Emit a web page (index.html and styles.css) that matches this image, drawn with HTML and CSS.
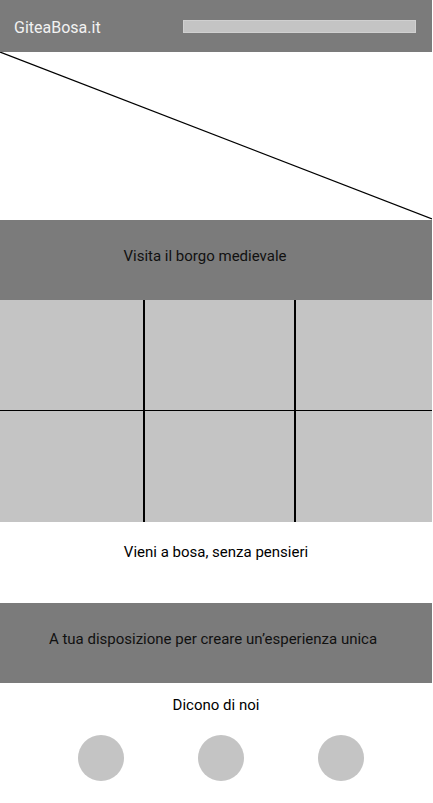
FILE: index.html
```html
<!DOCTYPE html>
<html lang="it">
<head>
  <meta charset="UTF-8">
  <meta name="viewport" content="width=device-width, initial-scale=1.0">
  <title>GiteaBosa.it</title>
  <link rel="stylesheet" href="styles.css">
</head>
<body>
  <div class="page">
    <!-- Top bar -->
    <header class="topbar">
      <span class="logo">GiteaBosa.it</span>
      <div class="search-bar"></div>
    </header>

    <!-- Hero placeholder -->
    <div class="hero">
      <svg class="hero-line" viewBox="0 0 432 168" preserveAspectRatio="none">
        <line x1="0" y1="0" x2="432" y2="167" stroke="#000" stroke-width="1.2" />
      </svg>
    </div>

    <section class="band band-borgo">
      <p>Visita il borgo medievale</p>
    </section>

    <!-- Photo grid -->
    <div class="gallery">
      <div class="tile"></div>
      <div class="tile"></div>
      <div class="tile"></div>
      <div class="tile"></div>
      <div class="tile"></div>
      <div class="tile"></div>
    </div>

    <section class="tagline">
      <p>Vieni a bosa, senza pensieri</p>
    </section>

    <section class="band band-unica">
      <p>A tua disposizione per creare un’esperienza unica</p>
    </section>

    <section class="reviews">
      <p class="reviews-title">Dicono di noi</p>
      <div class="avatars">
        <div class="avatar"></div>
        <div class="avatar"></div>
        <div class="avatar"></div>
      </div>
    </section>
  </div>
</body>
</html>
```

FILE: styles.css
```css
* {
  margin: 0;
  padding: 0;
  box-sizing: border-box;
}
body {
  font-family: Roboto, 'Noto Sans', sans-serif;
  background: #ffffff;
  color: #000000;
  width: 433px;
  height: 803px;
  overflow: hidden;
}
.page {
  width: 432px;
}
.topbar {
  height: 52px;
  background: #7b7b7b;
  display: flex;
  align-items: center;
  padding: 0 16px 0 14px;
}
.logo {
  color: #f2f2f2;
  font-size: 16px;
  padding-top: 2px;
}
.search-bar {
  margin-left: auto;
  width: 233px;
  height: 13px;
  background: #c4c4c4;
  border: 1px solid #d0d0d0;
}
.hero {
  height: 168px;
}
.hero-line {
  display: block;
  width: 100%;
  height: 100%;
}
.band {
  height: 80px;
  background: #7b7b7b;
  display: flex;
  align-items: center;
  justify-content: center;
  font-size: 15px;
  padding-bottom: 8px;
}
.band p {
  color: #111111;
}
.band-borgo {
  padding-right: 22px;
}
.band-unica {
  padding-right: 6px;
}
.gallery {
  display: grid;
  grid-template-columns: 143px 149px 136px;
  grid-template-rows: 110px 111px;
  column-gap: 2px;
  row-gap: 1px;
  background: #000000;
  height: 222px;
}
.tile {
  background: #c4c4c4;
}
.tagline {
  height: 81px;
  display: flex;
  justify-content: center;
  padding-top: 21px;
  font-size: 15px;
}
.reviews {
  display: flex;
  flex-direction: column;
  align-items: center;
  padding-top: 13px;
}
.reviews-title {
  font-size: 15px;
}
.avatars {
  display: flex;
  gap: 74px;
  margin-top: 21px;
  padding-left: 10px;
}
.avatar {
  width: 46px;
  height: 46px;
  border-radius: 50%;
  background: #c4c4c4;
}
```
